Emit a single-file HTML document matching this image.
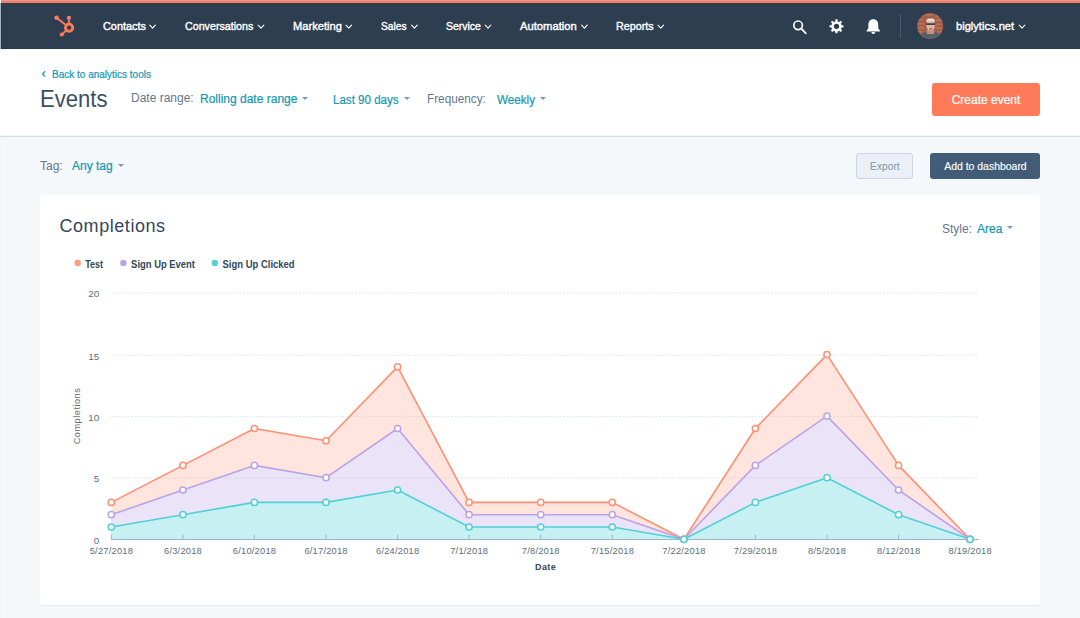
<!DOCTYPE html>
<html><head><meta charset="utf-8">
<style>
*{box-sizing:border-box;margin:0;padding:0}
html,body{width:1080px;height:618px;overflow:hidden;background:#f5f8fa;font-family:"Liberation Sans",sans-serif;position:relative}
.abs{position:absolute;white-space:nowrap}
#topbar{position:absolute;left:0;top:0;width:1080px;height:3px;background:#ff7a59}
#nav{position:absolute;left:0;top:3px;width:1080px;height:46px;background:#2d3e50}
.nv{position:absolute;top:14px;color:#fff;font-size:11.5px;font-weight:normal;-webkit-text-stroke:0.4px #fff;line-height:18px;white-space:nowrap}
.chev{position:absolute;top:0}
#hdr{position:absolute;left:0;top:49px;width:1080px;height:88px;background:#fff;border-bottom:1px solid #d3dce6;box-shadow:inset 0 -1px 0 #f2f5f8}
.link{color:#1297b3;-webkit-text-stroke:0.2px #1297b3}
.lbl{color:#65778a}
.caret{position:absolute;width:0;height:0;border-left:3.4px solid transparent;border-right:3.4px solid transparent;border-top:3.8px solid #7c98b6}
#card{position:absolute;left:40px;top:195px;width:1000px;height:410px;background:#fff;border-radius:3px;box-shadow:0 1px 1px rgba(45,62,80,0.08)}
</style></head>
<body>
<div id="topbar"></div><div class="abs" style="left:0;top:0;width:1080px;height:1px;background:#d99b8d"></div>
<div id="nav">
  <!-- sprocket logo -->
  <svg class="abs" style="left:50px;top:8px" width="32" height="32" viewBox="50 11 32 32">
    <g fill="none" stroke="#ff7a59" stroke-linecap="round">
      <circle cx="69.1" cy="27.7" r="3.6" stroke-width="2.9"/>
      <line x1="56.6" y1="17.7" x2="66.5" y2="25.4" stroke-width="1.9"/>
      <line x1="68.9" y1="18.5" x2="68.9" y2="23.5" stroke-width="1.8"/>
      <line x1="61.8" y1="34.4" x2="66.6" y2="30.3" stroke-width="1.9"/>
    </g>
    <g fill="#ff7a59">
      <circle cx="56.6" cy="17.7" r="2.3"/>
      <circle cx="68.9" cy="17.9" r="2.1"/>
      <circle cx="61.8" cy="34.5" r="2.1"/>
    </g>
  </svg>
  <div class="nv" style="left:103px;transform:scaleX(0.944);transform-origin:0 0">Contacts</div>
  <div class="nv" style="left:185px;transform:scaleX(0.93);transform-origin:0 0">Conversations</div>
  <div class="nv" style="left:293px;transform:scaleX(0.97);transform-origin:0 0">Marketing</div>
  <div class="nv" style="left:381px;transform:scaleX(0.886);transform-origin:0 0">Sales</div>
  <div class="nv" style="left:446px;transform:scaleX(0.91);transform-origin:0 0">Service</div>
  <div class="nv" style="left:520px;transform:scaleX(0.975);transform-origin:0 0">Automation</div>
  <div class="nv" style="left:616px;transform:scaleX(0.935);transform-origin:0 0">Reports</div>
  <div class="nv" style="left:956px;transform:scaleX(0.967);transform-origin:0 0">biglytics.net</div>
  <svg class="abs" style="left:0;top:0" width="1080" height="46" viewBox="0 3 1080 46">
    <g fill="none" stroke="#fff" stroke-width="1.1" stroke-linecap="round" stroke-linejoin="round">
      <polyline points="149.8,25.2 152.6,28.2 155.4,25.2"/>
      <polyline points="258.2,25.2 261,28.2 263.8,25.2"/>
      <polyline points="346,25.2 348.8,28.2 351.6,25.2"/>
      <polyline points="411.6,25.2 414.4,28.2 417.2,25.2"/>
      <polyline points="485.2,25.2 488,28.2 490.8,25.2"/>
      <polyline points="581.6,25.2 584.4,28.2 587.2,25.2"/>
      <polyline points="658,25.2 660.8,28.2 663.6,25.2"/>
      <polyline points="1019.2,25.2 1022,28.2 1024.8,25.2"/>
    </g>
    <!-- search -->
    <g fill="none" stroke="#fff" stroke-width="1.7" stroke-linecap="round">
      <circle cx="798.1" cy="25.3" r="4.3"/>
      <line x1="801.4" y1="28.7" x2="805.8" y2="33.4"/>
    </g>
    <!-- gear -->
    <g transform="translate(836.5,26.3)">
      <g fill="#fff"><path d="M-1.4,-4.5 L-0.9,-7 L0.9,-7 L1.4,-4.5z" transform="rotate(0)"/><path d="M-1.4,-4.5 L-0.9,-7 L0.9,-7 L1.4,-4.5z" transform="rotate(45)"/><path d="M-1.4,-4.5 L-0.9,-7 L0.9,-7 L1.4,-4.5z" transform="rotate(90)"/><path d="M-1.4,-4.5 L-0.9,-7 L0.9,-7 L1.4,-4.5z" transform="rotate(135)"/><path d="M-1.4,-4.5 L-0.9,-7 L0.9,-7 L1.4,-4.5z" transform="rotate(180)"/><path d="M-1.4,-4.5 L-0.9,-7 L0.9,-7 L1.4,-4.5z" transform="rotate(225)"/><path d="M-1.4,-4.5 L-0.9,-7 L0.9,-7 L1.4,-4.5z" transform="rotate(270)"/><path d="M-1.4,-4.5 L-0.9,-7 L0.9,-7 L1.4,-4.5z" transform="rotate(315)"/></g>
      <circle r="3.9" fill="none" stroke="#fff" stroke-width="2.5"/>
    </g>
    <!-- bell -->
    <path fill="#fff" d="M873.3,19.2 c-3.3,0 -4.9,2.4 -4.9,5.4 v3.6 l-1.7,2.3 v0.9 h13.2 v-0.9 l-1.7,-2.3 v-3.6 c0,-3 -1.6,-5.4 -4.9,-5.4z M871.4,32 h3.8 c0,1.2 -0.9,2 -1.9,2 s-1.9,-0.8 -1.9,-2z"/>
    <!-- separator -->
    <line x1="900.5" y1="14" x2="900.5" y2="38" stroke="#425b76" stroke-width="1"/>
    <!-- avatar -->
    <defs><clipPath id="av"><circle cx="930.2" cy="26.1" r="13"/></clipPath></defs>
    <g clip-path="url(#av)">
      <rect x="916" y="12" width="30" height="30" fill="#a45f48"/>
      <g fill="#c4866c" opacity="0.55">
        <rect x="917" y="15" width="6" height="1.6"/><rect x="925" y="14" width="7" height="1.6"/><rect x="935" y="15.5" width="6" height="1.6"/>
        <rect x="918" y="19" width="5" height="1.6"/><rect x="936" y="19.5" width="6" height="1.6"/>
        <rect x="917" y="23" width="7" height="1.6"/><rect x="936" y="23.5" width="5" height="1.6"/>
        <rect x="918" y="27" width="6" height="1.6"/><rect x="935" y="27.5" width="7" height="1.6"/>
        <rect x="917" y="31" width="5" height="1.6"/><rect x="937" y="31" width="5" height="1.6"/>
      </g>
      <path d="M921,42 L922,34 C924,32 927,31 930.5,31 C934,31 937,32 939,34 L940,42z" fill="#56606a"/>
      <path d="M926.5,30 h8 l-0.5,4 h-7z" fill="#c4907a"/>
      <ellipse cx="930.6" cy="25.3" rx="4.3" ry="5.6" fill="#e0b8a4"/>
      <path d="M926.3,22 C926.3,19 928,18.6 930.6,18.6 C933.2,18.6 935,19 935,22 C933,20.8 928,20.8 926.3,22z" fill="#e8e0dc"/>
      <rect x="926.2" y="23.3" width="8.8" height="1.6" fill="#3b3030"/>
      <rect x="929" y="27.8" width="3.2" height="2.4" fill="#9a6c5c" opacity="0.7"/>
    </g>
  </svg>
</div>

<div class="abs" style="left:0;top:0;width:1px;height:618px;background:#f2f5f8"></div>
<div class="abs" style="left:0;top:3px;width:1px;height:46px;background:#a9b4c0"></div>
<div class="abs" style="left:1px;top:3px;width:1px;height:46px;background:#24364a"></div>
<div class="abs" style="left:1px;top:48px;width:1079px;height:1px;background:#26384c"></div>
<div id="hdr">
  <svg class="abs" style="left:40px;top:21px" width="8" height="8" viewBox="0 0 8 8"><polyline points="5.2,1.2 2.6,3.9 5.2,6.6" fill="none" stroke="#1297b3" stroke-width="1.3"/></svg>
  <div class="abs link" style="left:52px;top:19px;font-size:10px;line-height:14px">Back to analytics tools</div>
  <div class="abs" style="left:40px;top:35.5px;font-size:23px;line-height:28px;color:#3a4e63;transform:scaleX(0.96);transform-origin:0 0">Events</div>
  <div class="abs lbl" style="left:131px;top:41.2px;font-size:12px;line-height:16px">Date range:</div>
  <div class="abs link" style="left:200px;top:41.6px;font-size:12px;line-height:16px">Rolling date range</div>
  <div class="caret" style="left:302.3px;top:48px"></div>
  <div class="abs link" style="left:333px;top:43px;font-size:12px;line-height:16px;transform:scaleX(0.964);transform-origin:0 0">Last 90 days</div>
  <div class="caret" style="left:403.6px;top:48.3px"></div>
  <div class="abs lbl" style="left:427px;top:42px;font-size:12px;line-height:16px;transform:scaleX(0.98);transform-origin:0 0">Frequency:</div>
  <div class="abs link" style="left:497px;top:43px;font-size:12px;line-height:16px;transform:scaleX(0.97);transform-origin:0 0">Weekly</div>
  <div class="caret" style="left:540.2px;top:48.3px"></div>
  <div class="abs" style="left:932px;top:34px;width:108px;height:33px;background:#ff7a59;border-radius:3px;color:#fff;font-size:12px;line-height:35px;text-align:center;-webkit-text-stroke:0.2px #fff">Create event</div>
</div>

<!-- tag row -->
<div class="abs lbl" style="left:40px;top:158px;font-size:12px;line-height:16px">Tag:</div>
<div class="abs link" style="left:72px;top:158px;font-size:12px;line-height:16px">Any tag</div>
<div class="caret" style="left:117.6px;top:164px"></div>
<div class="abs" style="left:856px;top:153px;width:57px;height:26px;background:#eaf0f6;border:1px solid #cbd6e2;border-radius:3px;color:#8396aa;font-size:11px;line-height:24px;text-align:center"><span style="display:inline-block;transform:scaleX(0.93)">Export</span></div>
<div class="abs" style="left:930px;top:153px;width:110px;height:26px;background:#425b76;border-radius:3px;color:#fff;font-size:11px;line-height:26px;text-align:center"><span style="display:inline-block;transform:scaleX(0.95);-webkit-text-stroke:0.15px #fff">Add to dashboard</span></div>

<div id="card"></div>
<div class="abs" style="left:59.5px;top:215px;font-size:18px;line-height:22px;color:#33475b;letter-spacing:0.55px">Completions</div>
<div class="abs lbl" style="left:942px;top:221px;font-size:12px;line-height:16px">Style:</div>
<div class="abs link" style="left:977px;top:221px;font-size:12px;line-height:16px">Area</div>
<div class="caret" style="left:1006.6px;top:226px"></div>

<svg class="abs" style="left:0;top:0" width="1080" height="618" viewBox="0 0 1080 618" id="chart">
<path d="M111.3,539.3 L111.3,502.4 182.9,465.4 254.4,428.5 326.0,440.8 397.6,366.9 469.1,502.4 540.7,502.4 612.3,502.4 683.9,539.3 755.4,428.5 827.0,354.6 898.6,465.4 970.1,539.3 L970.1,539.3 Z" fill="#ffe5dd"/>
<path d="M111.3,539.3 L111.3,514.7 182.9,490.0 254.4,465.4 326.0,477.7 397.6,428.5 469.1,514.7 540.7,514.7 612.3,514.7 683.9,539.3 755.4,465.4 827.0,416.1 898.6,490.0 970.1,539.3 L970.1,539.3 Z" fill="#ebe3f8"/>
<path d="M111.3,539.3 L111.3,527.0 182.9,514.7 254.4,502.4 326.0,502.4 397.6,490.0 469.1,527.0 540.7,527.0 612.3,527.0 683.9,539.3 755.4,502.4 827.0,477.7 898.6,514.7 970.1,539.3 L970.1,539.3 Z" fill="#c6f0f2"/>
<line x1="111" y1="477.9" x2="979" y2="477.9" stroke="#b4c5d6" stroke-opacity="0.42" stroke-width="1" stroke-dasharray="2,1.3"/>
<line x1="111" y1="416.6" x2="979" y2="416.6" stroke="#b4c5d6" stroke-opacity="0.42" stroke-width="1" stroke-dasharray="2,1.3"/>
<line x1="111" y1="355.2" x2="979" y2="355.2" stroke="#b4c5d6" stroke-opacity="0.42" stroke-width="1" stroke-dasharray="2,1.3"/>
<line x1="111" y1="293.0" x2="979" y2="293.0" stroke="#b4c5d6" stroke-opacity="0.42" stroke-width="1" stroke-dasharray="2,1.3"/>
<line x1="111" y1="539.5" x2="979" y2="539.5" stroke="#9fb3c8" stroke-width="1"/>
<line x1="111.3" y1="534.8" x2="111.3" y2="539.5" stroke="#9fb3c8" stroke-width="1"/>
<line x1="182.9" y1="534.8" x2="182.9" y2="539.5" stroke="#9fb3c8" stroke-width="1"/>
<line x1="254.4" y1="534.8" x2="254.4" y2="539.5" stroke="#9fb3c8" stroke-width="1"/>
<line x1="326.0" y1="534.8" x2="326.0" y2="539.5" stroke="#9fb3c8" stroke-width="1"/>
<line x1="397.6" y1="534.8" x2="397.6" y2="539.5" stroke="#9fb3c8" stroke-width="1"/>
<line x1="469.1" y1="534.8" x2="469.1" y2="539.5" stroke="#9fb3c8" stroke-width="1"/>
<line x1="540.7" y1="534.8" x2="540.7" y2="539.5" stroke="#9fb3c8" stroke-width="1"/>
<line x1="612.3" y1="534.8" x2="612.3" y2="539.5" stroke="#9fb3c8" stroke-width="1"/>
<line x1="683.9" y1="534.8" x2="683.9" y2="539.5" stroke="#9fb3c8" stroke-width="1"/>
<line x1="755.4" y1="534.8" x2="755.4" y2="539.5" stroke="#9fb3c8" stroke-width="1"/>
<line x1="827.0" y1="534.8" x2="827.0" y2="539.5" stroke="#9fb3c8" stroke-width="1"/>
<line x1="898.6" y1="534.8" x2="898.6" y2="539.5" stroke="#9fb3c8" stroke-width="1"/>
<line x1="970.1" y1="534.8" x2="970.1" y2="539.5" stroke="#9fb3c8" stroke-width="1"/>
<polyline points="111.3,502.4 182.9,465.4 254.4,428.5 326.0,440.8 397.6,366.9 469.1,502.4 540.7,502.4 612.3,502.4 683.9,539.3 755.4,428.5 827.0,354.6 898.6,465.4 970.1,539.3" fill="none" stroke="#ff8f73" stroke-width="1.6" stroke-linejoin="round"/>
<polyline points="111.3,514.7 182.9,490.0 254.4,465.4 326.0,477.7 397.6,428.5 469.1,514.7 540.7,514.7 612.3,514.7 683.9,539.3 755.4,465.4 827.0,416.1 898.6,490.0 970.1,539.3" fill="none" stroke="#b9a3e8" stroke-width="1.6" stroke-linejoin="round"/>
<polyline points="111.3,527.0 182.9,514.7 254.4,502.4 326.0,502.4 397.6,490.0 469.1,527.0 540.7,527.0 612.3,527.0 683.9,539.3 755.4,502.4 827.0,477.7 898.6,514.7 970.1,539.3" fill="none" stroke="#4fd1d7" stroke-width="1.6" stroke-linejoin="round"/>
<circle cx="111.3" cy="502.4" r="3.1" fill="#fff" stroke="#ff8f73" stroke-width="1.5"/>
<circle cx="182.9" cy="465.4" r="3.1" fill="#fff" stroke="#ff8f73" stroke-width="1.5"/>
<circle cx="254.4" cy="428.5" r="3.1" fill="#fff" stroke="#ff8f73" stroke-width="1.5"/>
<circle cx="326.0" cy="440.8" r="3.1" fill="#fff" stroke="#ff8f73" stroke-width="1.5"/>
<circle cx="397.6" cy="366.9" r="3.1" fill="#fff" stroke="#ff8f73" stroke-width="1.5"/>
<circle cx="469.1" cy="502.4" r="3.1" fill="#fff" stroke="#ff8f73" stroke-width="1.5"/>
<circle cx="540.7" cy="502.4" r="3.1" fill="#fff" stroke="#ff8f73" stroke-width="1.5"/>
<circle cx="612.3" cy="502.4" r="3.1" fill="#fff" stroke="#ff8f73" stroke-width="1.5"/>
<circle cx="683.9" cy="539.3" r="3.1" fill="#fff" stroke="#ff8f73" stroke-width="1.5"/>
<circle cx="755.4" cy="428.5" r="3.1" fill="#fff" stroke="#ff8f73" stroke-width="1.5"/>
<circle cx="827.0" cy="354.6" r="3.1" fill="#fff" stroke="#ff8f73" stroke-width="1.5"/>
<circle cx="898.6" cy="465.4" r="3.1" fill="#fff" stroke="#ff8f73" stroke-width="1.5"/>
<circle cx="970.1" cy="539.3" r="3.1" fill="#fff" stroke="#ff8f73" stroke-width="1.5"/>
<circle cx="111.3" cy="514.7" r="3.1" fill="#fff" stroke="#b9a3e8" stroke-width="1.5"/>
<circle cx="182.9" cy="490.0" r="3.1" fill="#fff" stroke="#b9a3e8" stroke-width="1.5"/>
<circle cx="254.4" cy="465.4" r="3.1" fill="#fff" stroke="#b9a3e8" stroke-width="1.5"/>
<circle cx="326.0" cy="477.7" r="3.1" fill="#fff" stroke="#b9a3e8" stroke-width="1.5"/>
<circle cx="397.6" cy="428.5" r="3.1" fill="#fff" stroke="#b9a3e8" stroke-width="1.5"/>
<circle cx="469.1" cy="514.7" r="3.1" fill="#fff" stroke="#b9a3e8" stroke-width="1.5"/>
<circle cx="540.7" cy="514.7" r="3.1" fill="#fff" stroke="#b9a3e8" stroke-width="1.5"/>
<circle cx="612.3" cy="514.7" r="3.1" fill="#fff" stroke="#b9a3e8" stroke-width="1.5"/>
<circle cx="683.9" cy="539.3" r="3.1" fill="#fff" stroke="#b9a3e8" stroke-width="1.5"/>
<circle cx="755.4" cy="465.4" r="3.1" fill="#fff" stroke="#b9a3e8" stroke-width="1.5"/>
<circle cx="827.0" cy="416.1" r="3.1" fill="#fff" stroke="#b9a3e8" stroke-width="1.5"/>
<circle cx="898.6" cy="490.0" r="3.1" fill="#fff" stroke="#b9a3e8" stroke-width="1.5"/>
<circle cx="970.1" cy="539.3" r="3.1" fill="#fff" stroke="#b9a3e8" stroke-width="1.5"/>
<circle cx="111.3" cy="527.0" r="3.1" fill="#fff" stroke="#4fd1d7" stroke-width="1.5"/>
<circle cx="182.9" cy="514.7" r="3.1" fill="#fff" stroke="#4fd1d7" stroke-width="1.5"/>
<circle cx="254.4" cy="502.4" r="3.1" fill="#fff" stroke="#4fd1d7" stroke-width="1.5"/>
<circle cx="326.0" cy="502.4" r="3.1" fill="#fff" stroke="#4fd1d7" stroke-width="1.5"/>
<circle cx="397.6" cy="490.0" r="3.1" fill="#fff" stroke="#4fd1d7" stroke-width="1.5"/>
<circle cx="469.1" cy="527.0" r="3.1" fill="#fff" stroke="#4fd1d7" stroke-width="1.5"/>
<circle cx="540.7" cy="527.0" r="3.1" fill="#fff" stroke="#4fd1d7" stroke-width="1.5"/>
<circle cx="612.3" cy="527.0" r="3.1" fill="#fff" stroke="#4fd1d7" stroke-width="1.5"/>
<circle cx="683.9" cy="539.3" r="3.1" fill="#fff" stroke="#4fd1d7" stroke-width="1.5"/>
<circle cx="755.4" cy="502.4" r="3.1" fill="#fff" stroke="#4fd1d7" stroke-width="1.5"/>
<circle cx="827.0" cy="477.7" r="3.1" fill="#fff" stroke="#4fd1d7" stroke-width="1.5"/>
<circle cx="898.6" cy="514.7" r="3.1" fill="#fff" stroke="#4fd1d7" stroke-width="1.5"/>
<circle cx="970.1" cy="539.3" r="3.1" fill="#fff" stroke="#4fd1d7" stroke-width="1.5"/>
<g font-family="Liberation Sans" font-size="9.3" fill="#5c6d80" text-anchor="middle" letter-spacing="0.22">
<text x="111.4" y="554">5/27/2018</text>
<text x="183.0" y="554">6/3/2018</text>
<text x="254.5" y="554">6/10/2018</text>
<text x="326.1" y="554">6/17/2018</text>
<text x="397.7" y="554">6/24/2018</text>
<text x="469.2" y="554">7/1/2018</text>
<text x="540.8" y="554">7/8/2018</text>
<text x="612.4" y="554">7/15/2018</text>
<text x="684.0" y="554">7/22/2018</text>
<text x="755.5" y="554">7/29/2018</text>
<text x="827.1" y="554">8/5/2018</text>
<text x="898.7" y="554">8/12/2018</text>
<text x="970.2" y="554">8/19/2018</text>
</g>
<g font-family="Liberation Sans" font-size="9.8" fill="#5c6d80" text-anchor="end">
<text x="99.2" y="543.6">0</text>
<text x="99.2" y="482.2">5</text>
<text x="99.2" y="420.9">10</text>
<text x="99.2" y="359.5">15</text>
<text x="99.2" y="297.3">20</text>
</g>
<text x="545.6" y="570.2" font-family="Liberation Sans" font-size="9" font-weight="bold" letter-spacing="0.45" fill="#33475b" text-anchor="middle">Date</text>
<text transform="translate(80,416) rotate(-90)" font-family="Liberation Sans" font-size="9.2" letter-spacing="0.5" fill="#5c6d80" text-anchor="middle">Completions</text>
<circle cx="77.7" cy="262.9" r="3.2" fill="#fd9b84"/>
<text x="85.3" y="267.8" font-family="Liberation Sans" font-size="10" font-weight="bold" fill="#33475b" textLength="17.8" lengthAdjust="spacingAndGlyphs">Test</text>
<circle cx="123.4" cy="262.9" r="3.2" fill="#b9a4e7"/>
<text x="131.1" y="267.8" font-family="Liberation Sans" font-size="10" font-weight="bold" fill="#33475b" textLength="63.9" lengthAdjust="spacingAndGlyphs">Sign Up Event</text>
<circle cx="214.8" cy="262.9" r="3.2" fill="#55d1d7"/>
<text x="222.5" y="267.8" font-family="Liberation Sans" font-size="10" font-weight="bold" fill="#33475b" textLength="72.1" lengthAdjust="spacingAndGlyphs">Sign Up Clicked</text>
</svg>
</body></html>
